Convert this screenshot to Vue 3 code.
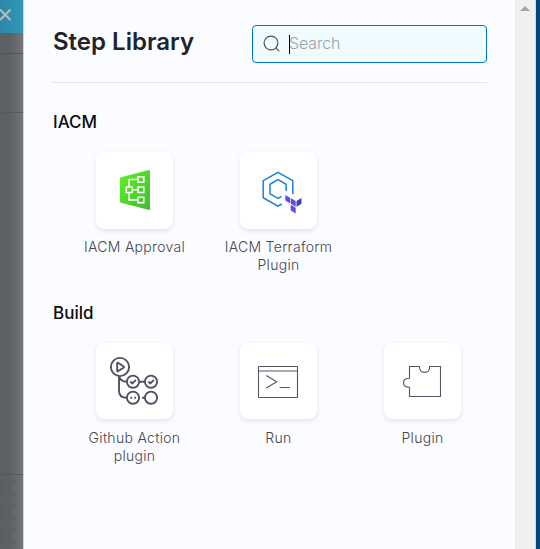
<script setup>
const sections = [
  {
    title: 'IACM',
    steps: [
      { icon: 'approval', label: 'IACM Approval' },
      { icon: 'terraform', label: 'IACM Terraform Plugin' }
    ]
  },
  {
    title: 'Build',
    steps: [
      { icon: 'github', label: 'Github Action plugin' },
      { icon: 'run', label: 'Run' },
      { icon: 'plugin', label: 'Plugin' }
    ]
  }
]
</script>

<template>
  <div class="screen">
    <aside class="backdrop">
      <div class="close-bar">
        <svg width="23" height="33" viewBox="0 0 23 33"><path d="M0 9.5 10.5 20M10.5 9.5 0 20" fill="none" stroke="#b5bdc0" stroke-width="2" /></svg>
      </div>
      <div class="strip first"></div>
      <div class="strip second"></div>
      <div class="strip third"></div>
      <div class="strip dots"></div>
    </aside>

    <main class="panel">
      <header class="header">
        <h1>Step Library</h1>
        <div class="search">
          <svg width="18" height="18" viewBox="0 0 18 18" fill="none" stroke="#4f5162" stroke-width="1.2">
            <circle cx="8" cy="8" r="6.9" /><path d="m12.8 12.8 3.5 3.5" />
          </svg>
          <span class="caret"></span>
          <span class="placeholder">Search</span>
        </div>
      </header>

      <section v-for="section in sections" :key="section.title" class="section">
        <h2>{{ section.title }}</h2>
        <div class="grid">
          <div v-for="step in section.steps" :key="step.label" class="step">
            <div class="tile">
              <svg v-if="step.icon === 'approval'" width="77" height="77" viewBox="0 0 77 77" fill="none">
                <defs>
                  <linearGradient id="green" x1="0" y1="0" x2="1" y2="1">
                    <stop offset="0" stop-color="#5cf520" /><stop offset="1" stop-color="#42b83a" />
                  </linearGradient>
                </defs>
                <path d="M25 25.3 53 18Q54 17.8 54 19V57Q54 58.2 53 58L25 50.8Q24 50.5 24 49.5V26.7Q24 25.6 25 25.3Z" fill="url(#green)" />
                <g stroke="#fff" stroke-width="1.5">
                  <path d="M42 27.5H33V35.3M33 40.3V48H42M36 37.8H42" />
                  <path d="M42 24.8H47.8V30.2H42ZM42 35.1H47.8V40.5H42ZM42 45.3H47.8V50.7H42ZM30.3 35.1H36.1V40.5H30.3Z" />
                </g>
              </svg>
              <svg v-else-if="step.icon === 'terraform'" width="77" height="77" viewBox="0 0 77 77" fill="none">
                <path d="M52.8 42.3V28.7L38 20.3 23.2 28.7V45.7L38 54.2 41.8 52M46.1 39V32.3L38 27.7 30 32.3V41.8L38 46.3 41.4 44.5" stroke="#1682dc" stroke-width="1.5" />
                <path d="M45.3 43 50 45.7V51.3L45.3 48.6ZM50.7 46 55.7 48.9V54.7L50.7 51.8ZM50.7 52.8 55.7 55.7V61.5L50.7 58.6Z" fill="#5c4ee5" />
                <path d="M56.5 48.9 61.5 46V51.8L56.5 54.7Z" fill="#4040b2" />
              </svg>
              <svg v-else-if="step.icon === 'github'" width="77" height="76" viewBox="0 0 77 76" fill="none" stroke="#4f5162" stroke-width="1.9">
                <circle cx="24" cy="24" r="9.1" />
                <path d="M21.2 20.2V27.8Q21.2 28.7 22 28.2L27.7 24.5Q28.3 24 27.7 23.5L22 19.8Q21.2 19.3 21.2 20.2Z" />
                <circle cx="37" cy="38.7" r="6.1" /><circle cx="55" cy="38.7" r="6.1" />
                <circle cx="37" cy="54.7" r="6.1" /><circle cx="55" cy="54.7" r="6.1" />
                <path d="M23 33V47.7Q23 54.7 30.7 54.7M23 33Q24.5 38.7 30.7 38.7M43.2 38.7H48.8M46 54.7H49M34.3 38.5 36.3 40.4 40 36.9M52.3 38.5 54.3 40.4 58 36.9M34.3 54.7H36M38.3 54.7H40" />
              </svg>
              <svg v-else-if="step.icon === 'run'" width="77" height="76" viewBox="0 0 77 76" fill="none" stroke="#555565" stroke-width="1.1">
                <rect x="18.5" y="23.5" width="39" height="31" rx=".5" />
                <path d="M18.5 28H57.5M26.3 32.5 36.7 38.7 26.3 45M39.7 44.5H49.7" />
              </svg>
              <svg v-else width="77" height="76" viewBox="0 0 77 76" fill="none" stroke="#555565" stroke-width="1.1">
                <path d="M25.5 23.5H35.5C35.5 27 37.5 29.4 40.7 29.4S45.7 27 45.7 23.5H56.5V53.5H25.5V44.2C22 44.2 19.5 42.4 19.5 39.7S22 35.2 25.5 35.2Z" />
              </svg>
            </div>
            <span class="label">{{ step.label }}</span>
          </div>
        </div>
      </section>
    </main>

    <div class="scrollbar">
      <svg width="20" height="14" viewBox="0 0 20 14"><path d="M5 9 10 4 15 9Z" fill="#a3a3a3" /></svg>
    </div>
    <div class="edge"></div>
  </div>
</template>

<style>
body {
  margin: 0;
  overflow: hidden;
}
</style>

<style scoped>
.screen {
  display: flex;
  width: 540px;
  height: 549px;
  overflow: hidden;
  background: #fbfcff;
  font-family: Inter, sans-serif;
}
.backdrop {
  display: flex;
  flex-direction: column;
  flex: 0 0 23px;
  background: linear-gradient(90deg, #5b6062, #5d6163 45%, #73777a);
}
.close-bar {
  height: 33px;
  background: linear-gradient(90deg, #2b86a7, #3299b9);
}
.close-bar svg {
  display: block;
}
.strip {
  box-sizing: border-box;
  border-bottom: 1px solid #515558;
}
.first { height: 21px; }
.second { height: 59px; border-color: #575b5e; }
.third { height: 362px; border-color: #54585b; }
.dots {
  flex: 1;
  border: 0;
  background: radial-gradient(ellipse 1.5px 1px at 2px 7px, #53585b 90%, transparent) 0 0 / 12px 12px;
}
.panel {
  box-sizing: border-box;
  flex: 0 0 492px;
  min-width: 0;
  padding: 25px 28px 0 29px;
  border-left: 1px solid #d2d4d9;
}
.header {
  display: flex;
  box-sizing: border-box;
  width: 434px;
  height: 58px;
  justify-content: space-between;
  border-bottom: 1px solid #e2e4e9;
}
h1 {
  margin: 1px 0 0;
  color: #22222a;
  font-size: 24px;
  font-weight: 600;
  line-height: 32px;
}
.search {
  display: flex;
  box-sizing: border-box;
  width: 235px;
  height: 38px;
  align-items: center;
  padding-left: 10px;
  border: 1px solid #0278d5;
  border-radius: 4px;
  background: #effbff;
}
.caret {
  width: 1px;
  height: 19px;
  margin-left: 8px;
  background: #000;
}
.placeholder {
  margin: -2px 0 0 -1px;
  color: #98a2a9;
  font-size: 16px;
  font-weight: 300;
  line-height: 20px;
  letter-spacing: -.15px;
}
.section {
  box-sizing: border-box;
  height: 191px;
}
.section:first-of-type {
  padding-top: 27px;
  height: 218px;
}
h2 {
  margin: 0 0 18px;
  color: #0b0b0d;
  font-size: 17px;
  font-weight: 500;
  line-height: 24px;
}
.grid {
  display: grid;
  grid-template-columns: repeat(3, 144px);
  margin-left: 9px;
}
.step {
  display: flex;
  flex-direction: column;
  align-items: center;
}
.tile {
  width: 77px;
  height: 77px;
  border-radius: 8px;
  background: #fff;
  box-shadow: 0 2px 4px rgba(96, 97, 112, .16), 0 0 1px rgba(40, 41, 61, .04);
}
.section:last-child .tile {
  height: 76px;
}
.tile svg {
  display: block;
}
.label {
  width: 120px;
  margin-top: 9px;
  padding-left: 1px;
  color: #45464f;
  font-size: 14px;
  font-weight: 300;
  line-height: 18px;
  letter-spacing: .3px;
  text-align: center;
}
.section:last-child .label {
  margin-top: 10px;
}
.scrollbar {
  flex: 0 0 20px;
  background: #f0f0f0;
}
.edge {
  box-sizing: border-box;
  flex: 0 0 5px;
  border-left: 1px solid #d5dbe1;
  background: linear-gradient(90deg, #064476, #004b84);
}
</style>
